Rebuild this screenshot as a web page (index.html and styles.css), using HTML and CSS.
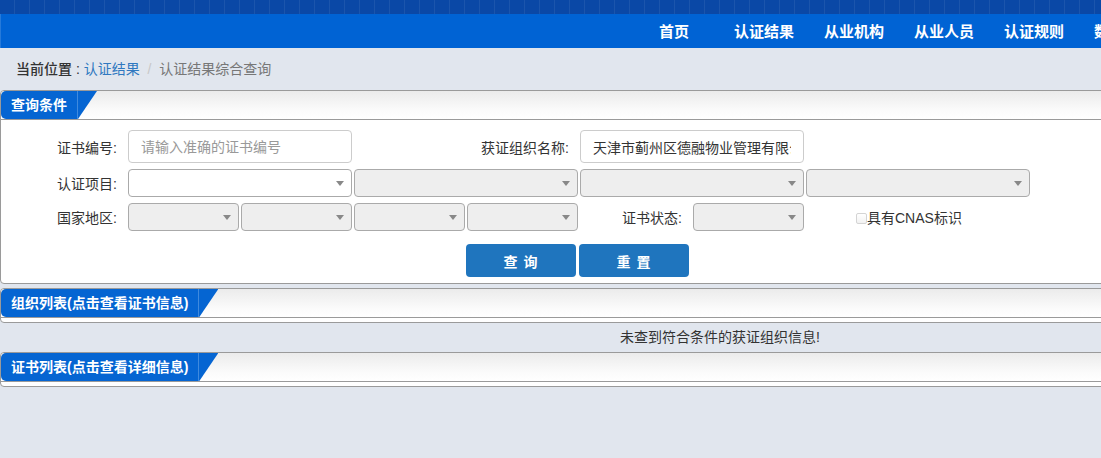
FILE: index.html
```html
<!DOCTYPE html>
<html lang="zh-CN">
<head>
<meta charset="utf-8">
<title>认证结果综合查询</title>
<link rel="stylesheet" href="styles.css">
</head>
<body>
<div class="page">
  <div class="topstrip"></div>
  <nav class="navbar">
    <ul class="nav">
      <li>首页</li>
      <li>认证结果</li>
      <li>从业机构</li>
      <li>从业人员</li>
      <li>认证规则</li>
      <li>数据统计</li>
    </ul>
  </nav>
  <div class="crumb">
    <span class="crumb-label">当前位置 :</span>
    <a class="crumb-link">认证结果</a>
    <span class="crumb-sep">/</span>
    <span class="crumb-current">认证结果综合查询</span>
  </div>

  <section class="panel">
    <div class="panel-head"><span class="tab">查询条件</span></div>
    <div class="panel-body">
      <div class="form">
        <label class="lbl c0">证书编号:</label>
        <input class="txt c1-2" type="text" placeholder="请输入准确的证书编号">
        <label class="lbl c3-4">获证组织名称:</label>
        <input class="txt c5-6" type="text" value="天津市蓟州区德融物业管理有限公司">

        <label class="lbl c0">认证项目:</label>
        <div class="sel white c1-2"></div>
        <div class="sel c3-4"></div>
        <div class="sel c5-6"></div>
        <div class="sel c7-8"></div>

        <label class="lbl c0">国家地区:</label>
        <div class="sel c1"></div>
        <div class="sel c2"></div>
        <div class="sel c3"></div>
        <div class="sel c4"></div>
        <label class="lbl c5">证书状态:</label>
        <div class="sel c6"></div>
        <label class="chk c7-8"><span class="box"></span>具有CNAS标识</label>

        <button class="btn c4">查 询</button>
        <button class="btn c5">重 置</button>
      </div>
    </div>
  </section>

  <section class="panel">
    <div class="panel-head"><span class="tab">组织列表(点击查看证书信息)</span></div>
    <div class="panel-body empty"></div>
  </section>

  <div class="message">未查到符合条件的获证组织信息!</div>

  <section class="panel">
    <div class="panel-head"><span class="tab">证书列表(点击查看详细信息)</span></div>
    <div class="panel-body empty"></div>
  </section>
</div>
</body>
</html>
```

FILE: styles.css
```css
html, body {
  margin: 0;
  padding: 0;
  overflow: hidden;
  background: #e1e6ee;
}
body {
  font-family: "Liberation Sans", "Noto Sans CJK SC", sans-serif;
  font-size: 14px;
  color: #333;
}
.page {
  width: 1440px;
}
.topstrip {
  height: 14px;
  background-color: #0a48a6;
  background-image: repeating-linear-gradient(90deg, transparent 0 14px, rgba(255,255,255,0.07) 14px 15px);
}
.navbar {
  height: 34px;
  background: #0063d4;
  box-shadow: inset 1px 0 0 rgba(255,255,255,0.15);
}
.nav {
  list-style: none;
  margin: 0;
  padding: 0 0 0 629px;
  display: flex;
}
.nav li {
  width: 90px;
  text-align: center;
  color: #fff;
  font-size: 15px;
  font-weight: bold;
  line-height: 36px;
}
.crumb {
  height: 42px;
  line-height: 42px;
  padding-left: 16px;
}
.crumb-label {
  color: #333;
  font-weight: 500;
}
.crumb-link {
  color: #2f78c0;
}
.crumb-sep {
  color: #c8c8c8;
  padding: 0 4px;
}
.crumb-current {
  color: #777;
}
.panel {
  background: #fff;
  border: 1px solid #9a9a9a;
  border-radius: 4px;
  margin-bottom: 4px;
}
.panel-head {
  height: 28px;
  border-bottom: 1px solid #9a9a9a;
  background: linear-gradient(#ebebeb, #fbfbfb 70%, #fff);
  border-radius: 4px 4px 0 0;
}
.tab {
  display: inline-block;
  height: 28px;
  line-height: 28px;
  padding: 0 30px 0 10px;
  color: #fff;
  font-weight: bold;
  font-size: 14px;
  border-radius: 5px 0 0 5px;
  background: linear-gradient(90deg, #0565d2 0, #0565d2 calc(100% - 20px), #3f8ade calc(100% - 20px), #3f8ade calc(100% - 19px), #0565d2 calc(100% - 19px));
  clip-path: polygon(0 0, 100% 0, calc(100% - 19px) 100%, 0 100%);
}
.panel-body {
  padding: 10px 0 6px;
}
.panel-body.empty {
  padding: 0;
  height: 4px;
}
.form {
  display: grid;
  grid-template-columns: 125px repeat(8, 111px);
  grid-template-rows: 33px 28px 28px 40px;
  column-gap: 2px;
  row-gap: 6px;
  align-items: center;
}
.c0 { grid-column: 1; }
.c1 { grid-column: 2; }
.c2 { grid-column: 3; }
.c3 { grid-column: 4; }
.c4 { grid-column: 5; }
.c5 { grid-column: 6; }
.c6 { grid-column: 7; }
.c1-2 { grid-column: 2 / span 2; }
.c3-4 { grid-column: 4 / span 2; }
.c5-6 { grid-column: 6 / span 2; }
.c7-8 { grid-column: 8 / span 2; }
.lbl {
  text-align: right;
  padding-right: 9px;
  color: #333;
}
.txt {
  box-sizing: border-box;
  height: 33px;
  width: 100%;
  border: 1px solid #ccc;
  border-radius: 4px;
  padding: 0 12px;
  font-family: inherit;
  font-size: 14px;
  color: #333;
  background: #fff;
  outline: none;
  margin: 0;
}
.txt::placeholder {
  color: #999;
}
.sel {
  box-sizing: border-box;
  height: 28px;
  border: 1px solid #aaa;
  border-radius: 4px;
  background: #eee;
  display: flex;
  align-items: center;
  justify-content: flex-end;
  padding-right: 7px;
}
.sel.white {
  background: #fff;
}
.sel::after {
  content: "";
  width: 0;
  height: 0;
  border-left: 4px solid transparent;
  border-right: 4px solid transparent;
  border-top: 5px solid #888;
}
.chk {
  display: flex;
  align-items: center;
  padding-left: 50px;
  color: #333;
}
.box {
  box-sizing: border-box;
  width: 11px;
  height: 11px;
  border: 1px solid #d4d4d4;
  border-radius: 2px;
  background: linear-gradient(#fff, #f2f2f2);
  margin-top: 2px;
}
.btn {
  grid-row: 4;
  height: 33px;
  width: 110px;
  margin: 7px 0 0 -1px;
  align-self: start;
  border: none;
  border-radius: 4px;
  background: #1f75be;
  color: #fff;
  font-family: inherit;
  font-size: 14px;
  font-weight: bold;
  letter-spacing: 1px;
  padding: 0;
}
.message {
  height: 29px;
  line-height: 29px;
  margin-top: -4px;
  text-align: center;
  color: #333;
  font-size: 14px;
}
```
